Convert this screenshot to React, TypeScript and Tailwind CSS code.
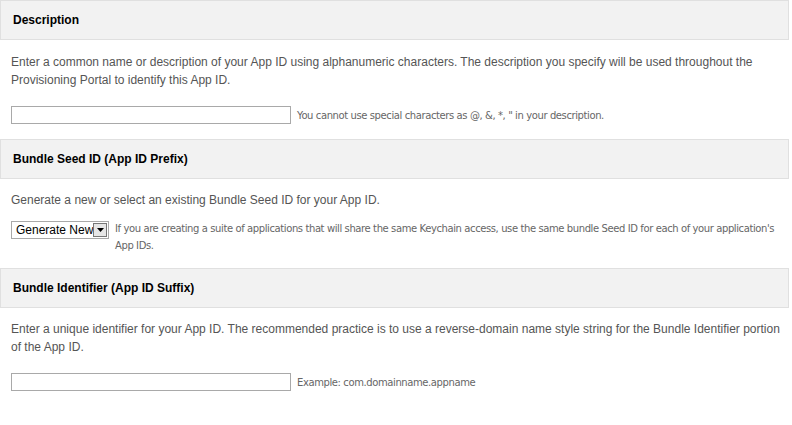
export default function App() {
  const header = "h-[40px] bg-[#f2f2f2] border border-[#e0e0e0] flex items-center pl-[12px] text-[12px] font-bold text-black";
  const para = "text-[12px] leading-[18px] text-[#555] pl-[11px] pr-[4px]";
  const note = "text-[10px] leading-[17px] text-[#666] font-[family-name:DejaVu_Sans,sans-serif] tracking-[-0.4px]";
  return (
    <div className="w-[792px] h-[425px] bg-white font-[family-name:Liberation_Sans,Arial,sans-serif] pr-[3px]">
      <div className={header}>Description</div>
      <div className="pt-[13px] pb-[15px]">
        <p className={para}>Enter a common name or description of your App ID using alphanumeric characters. The description you specify will be used throughout the Provisioning Portal to identify this App ID.</p>
        <div className="flex items-center mt-[17px] pl-[11px] gap-[6px]">
          <div className="w-[280px] h-[18px] border border-[#a9a9a9] bg-white" />
          <span className={note}>You cannot use special characters as @, &amp;, *, " in your description.</span>
        </div>
      </div>
      <div className={header}>Bundle Seed ID (App ID Prefix)</div>
      <div className="pt-[12px] pb-[14px]">
        <p className={para}>Generate a new or select an existing Bundle Seed ID for your App ID.</p>
        <div className="flex items-start mt-[11px] pl-[11px] gap-[6px]">
          <div className="mt-[1px] w-[98px] h-[18px] border border-[#a9a9a9] flex items-center shrink-0">
            <span className="flex-1 text-[12px] pl-[4px] text-black whitespace-nowrap">Generate New</span>
            <div className="w-[16px] h-[14px] mr-[1px] border border-[#777] bg-[#e6e6e6] flex items-center justify-center">
              <svg width="7" height="4" viewBox="0 0 7 4"><path d="M0 0h7L3.5 4z" fill="#000" /></svg>
            </div>
          </div>
          <span className={note}>If you are creating a suite of applications that will share the same Keychain access, use the same bundle Seed ID for each of your application's App IDs.</span>
        </div>
      </div>
      <div className={header}>Bundle Identifier (App ID Suffix)</div>
      <div className="pt-[12px]">
        <p className={para}>Enter a unique identifier for your App ID. The recommended practice is to use a reverse-domain name style string for the Bundle Identifier portion of the App ID.</p>
        <div className="flex items-center mt-[17px] pl-[11px] gap-[6px]">
          <div className="w-[280px] h-[18px] border border-[#a9a9a9] bg-white" />
          <span className={note}>Example: com.domainname.appname</span>
        </div>
      </div>
    </div>
  );
}
